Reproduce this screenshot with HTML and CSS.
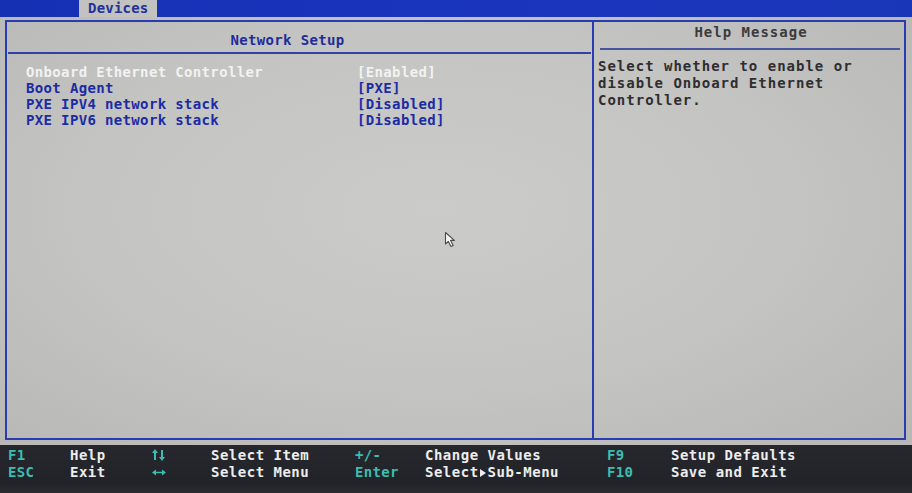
FILE: index.html
```html
<!DOCTYPE html>
<html lang="en">
<head>
<meta charset="utf-8">
<title>Devices - Network Setup</title>
<link rel="stylesheet" href="styles.css">
</head>
<body>
<div class="screen">
  <div class="topbar">
    <div class="tab">Devices</div>
  </div>
  <div class="main">
    <div class="frame">
      <section class="panel left">
        <div class="panel-head blue-head">Network Setup</div>
        <div class="items">
          <div class="item selected"><span class="label">Onboard Ethernet Controller</span><span class="value">[Enabled]</span></div>
          <div class="item"><span class="label">Boot Agent</span><span class="value">[PXE]</span></div>
          <div class="item"><span class="label">PXE IPV4 network stack</span><span class="value">[Disabled]</span></div>
          <div class="item"><span class="label">PXE IPV6 network stack</span><span class="value">[Disabled]</span></div>
        </div>
      </section>
      <section class="panel right">
        <div class="panel-head help-head">Help Message</div>
        <div class="help-text">Select whether to enable or<br>disable Onboard Ethernet<br>Controller.</div>
      </section>
    </div>
    <svg class="cursor" width="14" height="17" viewBox="0 0 14 17"><path d="M1.5 1.5 L1.5 13 L4.3 10.4 L7 15.5 L9.2 14.4 L6.6 9.4 L10.4 9.4 Z" fill="#f6f6f6" stroke="#4a4a4a" stroke-width="1.1" stroke-linejoin="round"/></svg>
  </div>
  <div class="footer">
    <span class="key">F1</span><span class="desc">Help</span>
    <span class="key arrows" aria-label="↑↓"><svg width="18" height="16" viewBox="0 0 18 16"><g fill="none" stroke="#3dbdb1" stroke-width="2"><path d="M5 13 V4"/><path d="M12 3 V12"/></g><g fill="#3dbdb1"><path d="M5 2 L8 6 L2 6 Z"/><path d="M12 14 L15 10 L9 10 Z"/></g></svg></span>
    <span class="desc">Select Item</span><span class="key">+/-</span><span class="desc">Change Values</span><span class="key">F9</span><span class="desc">Setup Defaults</span>
    <span class="key">ESC</span><span class="desc">Exit</span>
    <span class="key arrows" aria-label="←→"><svg width="18" height="16" viewBox="0 0 18 16"><path d="M5 8.5 H13" stroke="#3dbdb1" stroke-width="1.5"/><g fill="#3dbdb1"><path d="M2 8.5 L6 5.5 L6 11.5 Z"/><path d="M16 8.5 L12 5.5 L12 11.5 Z"/></g></svg></span>
    <span class="desc">Select Menu</span><span class="key">Enter</span><span class="desc">Select<span class="tri" aria-label="►"></span>Sub-Menu</span><span class="key">F10</span><span class="desc">Save and Exit</span>
  </div>
</div>
</body>
</html>
```

FILE: styles.css
```css
* { box-sizing: border-box; }

html, body {
  margin: 0;
  padding: 0;
  background: #23252a;
}

body {
  font-family: "DejaVu Sans Mono", "Liberation Mono", monospace;
  font-weight: bold;
  font-size: 14px;
  letter-spacing: 0.35px;
}

.screen {
  width: 912px;
  height: 493px;
  display: flex;
  flex-direction: column;
  overflow: hidden;
}

.topbar {
  height: 17px;
  background: linear-gradient(90deg, #1630b4 0%, #1a35bd 50%, #1a36b8 100%);
  display: flex;
  padding-left: 79px;
}

.tab {
  width: 78px;
  height: 17px;
  background: #c2c2c0;
  color: #22309a;
  line-height: 17px;
  padding-left: 9px;
  letter-spacing: 0.2px;
}

.main {
  position: relative;
  height: 428px;
  padding: 3px 6px 5px 5px;
  background: radial-gradient(ellipse 70% 75% at 48% 45%, #cbcbc9 0%, #c4c4c2 55%, #b8b8b6 100%);
}

.frame {
  height: 420px;
  border: 2px solid #2a3cb4;
  display: grid;
  grid-template-columns: 585px 1fr;
}

.panel.right {
  border-left: 2px solid #2a3cb4;
}

.panel-head {
  line-height: 16px;
  text-align: center;
  border-bottom: 2px solid #3042a8;
  margin: 0 1px;
}

.blue-head {
  color: #1f2c9c;
  height: 32px;
  padding-top: 10px;
  padding-right: 24px;
}

.help-head {
  color: #3b3b3d;
  height: 28px;
  padding-top: 2px;
  padding-left: 2px;
  letter-spacing: 1px;
  margin: 0 4px 0 6px;
  border-bottom-color: #4a55a0;
}

.items {
  margin-top: 10px;
  padding-left: 19px;
}

.item {
  display: flex;
  line-height: 16px;
  height: 16px;
  color: #1b2ba4;
}

.item .label {
  width: 331px;
}

.item.selected {
  color: #f2f2f2;
}

.help-text {
  margin-top: 8px;
  padding-left: 4px;
  line-height: 17px;
  color: #2e2e30;
  letter-spacing: 1px;
}

.cursor {
  position: absolute;
  left: 444px;
  top: 214px;
}

.footer {
  height: 48px;
  background: linear-gradient(180deg, #26282e 0%, #212328 80%, #2a2c31 100%);
  display: grid;
  grid-template-columns: 62px 80px 61px 144px 70px 182px 64px 1fr;
  grid-auto-rows: 16px;
  padding: 2px 0 0 8px;
  line-height: 16px;
  align-content: start;
  row-gap: 1px;
}

.key {
  color: #3dbdb1;
}

.desc {
  color: #ededed;
  letter-spacing: 0.5px;
}

.arrows {
  display: flex;
  align-items: center;
}

.arrows svg {
  display: block;
}

.tri {
  display: inline-block;
  width: 0;
  height: 0;
  margin: 0 2px 0 1px;
  border-top: 4.5px solid transparent;
  border-bottom: 4.5px solid transparent;
  border-left: 6px solid #ededed;
  vertical-align: 0;
}
```
